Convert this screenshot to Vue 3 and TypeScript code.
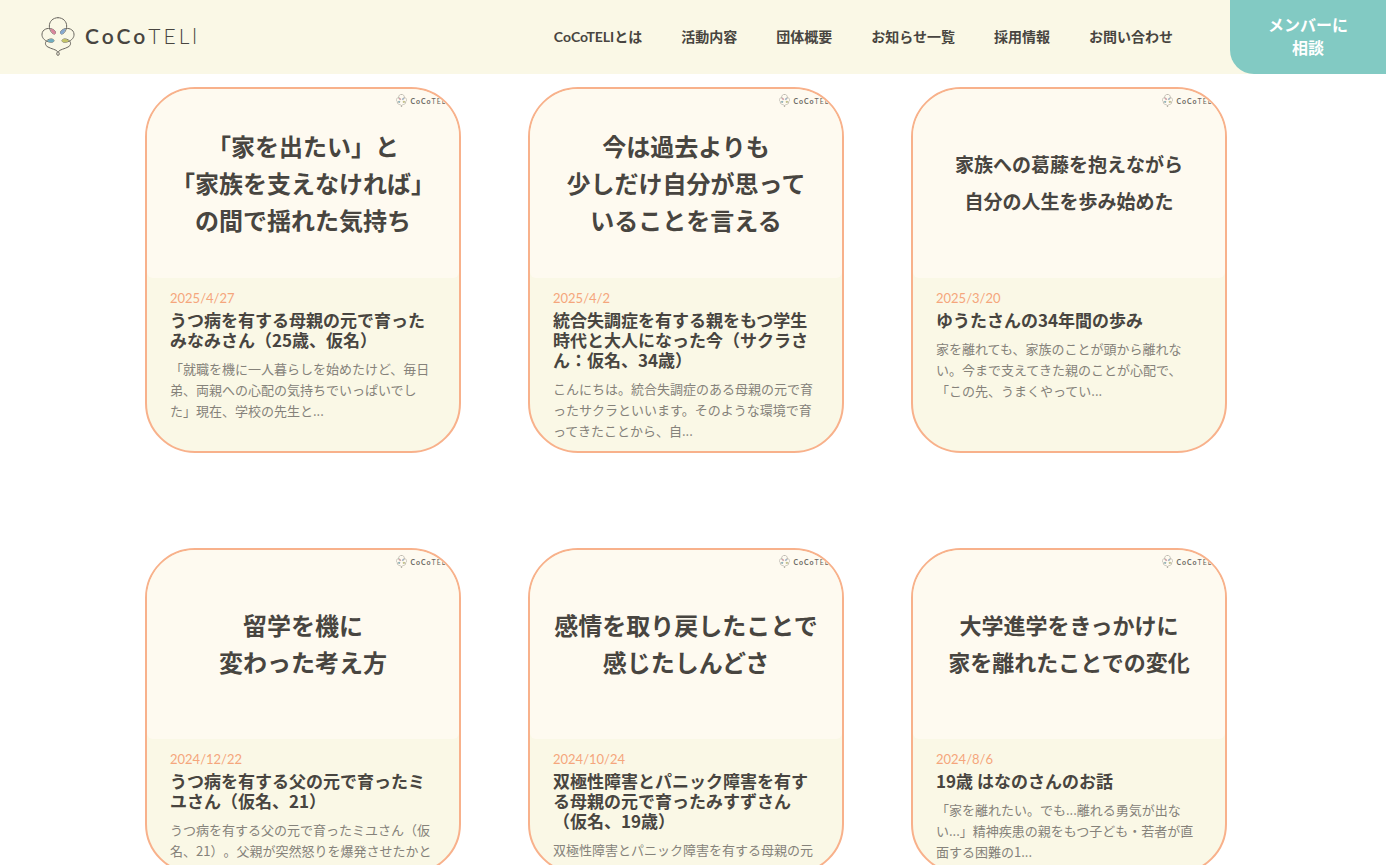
<script setup lang="ts">
import { defineComponent, h } from 'vue'

interface Story {
  caption: string[]
  size: 'large' | 'medium' | 'small'
  date: string
  title: string
  excerpt: string
}

const half =
  'M50 2C34 2 24 14 24 27C24 39 32 52 40 51C46 48 41 39 32 36C19 31 3 37 2 51C1 62 9 70 20 74C29 77 38 76 38 71C37 65 27 64 19 69C9 75 11 86 20 90C30 96 44 97 49 104C44 110 46 115 50 115'

const BrandMark = defineComponent({
  setup: () => () =>
    h('svg', { viewBox: '0 0 100 117', fill: 'none', 'aria-hidden': 'true' }, [
      h('g', { stroke: '#6a6760', 'stroke-width': 3, 'stroke-linecap': 'round' }, [
        h('path', { d: half }),
        h('path', { d: half, transform: 'matrix(-1 0 0 1 100 0)' }),
      ]),
      h('path', { d: 'M27 35C36 35 45 43 43 50C37 55 29 46 27 35Z', fill: '#d9869d' }),
      h('path', { d: 'M73 35C64 35 55 43 57 50C63 55 71 46 73 35Z', fill: '#86a9d0' }),
      h('path', { d: 'M17 72C25 64 37 64 38 71C37 77 25 77 17 72Z', fill: '#6fadc0' }),
      h('path', { d: 'M83 72C75 64 63 64 62 71C63 77 75 77 83 72Z', fill: '#c5c568' }),
    ]),
})

const links: string[] = ['CoCoTELIとは', '活動内容', '団体概要', 'お知らせ一覧', '採用情報', 'お問い合わせ']

const stories: Story[] = [
  {
    caption: ['「家を出たい」と', '「家族を支えなければ」', 'の間で揺れた気持ち'],
    size: 'large',
    date: '2025/4/27',
    title: 'うつ病を有する母親の元で育ったみなみさん（25歳、仮名）',
    excerpt: '「就職を機に一人暮らしを始めたけど、毎日弟、両親への心配の気持ちでいっぱいでした」現在、学校の先生と...',
  },
  {
    caption: ['今は過去よりも', '少しだけ自分が思って', 'いることを言える'],
    size: 'large',
    date: '2025/4/2',
    title: '統合失調症を有する親をもつ学生時代と大人になった今（サクラさん：仮名、34歳）',
    excerpt: 'こんにちは。統合失調症のある母親の元で育ったサクラといいます。そのような環境で育ってきたことから、自...',
  },
  {
    caption: ['家族への葛藤を抱えながら', '自分の人生を歩み始めた'],
    size: 'small',
    date: '2025/3/20',
    title: 'ゆうたさんの34年間の歩み',
    excerpt: '家を離れても、家族のことが頭から離れない。今まで支えてきた親のことが心配で、「この先、うまくやってい...',
  },
  {
    caption: ['留学を機に', '変わった考え方'],
    size: 'large',
    date: '2024/12/22',
    title: 'うつ病を有する父の元で育ったミユさん（仮名、21）',
    excerpt: 'うつ病を有する父の元で育ったミユさん（仮名、21）。父親が突然怒りを爆発させたかと',
  },
  {
    caption: ['感情を取り戻したことで', '感じたしんどさ'],
    size: 'large',
    date: '2024/10/24',
    title: '双極性障害とパニック障害を有する母親の元で育ったみすずさん（仮名、19歳）',
    excerpt: '双極性障害とパニック障害を有する母親の元',
  },
  {
    caption: ['大学進学をきっかけに', '家を離れたことでの変化'],
    size: 'medium',
    date: '2024/8/6',
    title: '19歳 はなのさんのお話',
    excerpt: '「家を離れたい。でも...離れる勇気が出ない...」精神疾患の親をもつ子ども・若者が直面する困難の1...',
  },
]
</script>

<template>
  <div class="page">
    <header class="header">
      <a class="logo" href="#">
        <BrandMark class="logo-mark" />
        <span class="logo-text"><b>CoCo</b>TELl</span>
      </a>
      <nav class="nav">
        <a v-for="link in links" :key="link" href="#">{{ link }}</a>
      </nav>
      <a class="consult" href="#">メンバーに<br />相談</a>
    </header>
    <main class="main">
      <div class="grid">
        <a v-for="story in stories" :key="story.date" class="card" href="#">
          <div class="cover">
            <div class="stamp">
              <BrandMark class="stamp-mark" />
              <span class="stamp-text"><b>CoCo</b>TELl</span>
            </div>
            <p class="caption" :class="story.size">
              <span v-for="line in story.caption" :key="line">{{ line }}</span>
            </p>
          </div>
          <div class="body">
            <time class="date">{{ story.date }}</time>
            <h2 class="title">{{ story.title }}</h2>
            <p class="excerpt">{{ story.excerpt }}</p>
          </div>
        </a>
      </div>
    </main>
  </div>
</template>

<style>
body {
  background: #fff;
}
</style>

<style scoped>
.page {
  height: 100vh;
  overflow: hidden auto;
  scrollbar-width: none;
  font-family: 'Noto Sans CJK JP', sans-serif;
  color: #484540;
  text-spacing-trim: space-all;
}
a {
  color: inherit;
  text-decoration: none;
}
.header {
  position: fixed;
  inset: 0 0 auto;
  z-index: 2;
  display: flex;
  align-items: center;
  height: 74px;
  background: #faf8e6;
}
.logo {
  display: flex;
  align-items: center;
  gap: 10px;
  padding: 0 0 2px 41px;
}
.logo-mark {
  width: 34px;
  height: 39px;
}
.logo-text {
  font: 300 21px/24px Lato, sans-serif;
  letter-spacing: 3px;
}
.logo-text b {
  font-weight: 600;
}
.nav {
  display: flex;
  gap: 39px;
  margin-left: auto;
  padding-right: 57px;
  font: 700 14px/20px Lato, 'Noto Sans CJK JP', sans-serif;
  white-space: nowrap;
}
.consult {
  box-sizing: border-box;
  display: flex;
  flex: none;
  align-items: center;
  justify-content: center;
  width: 156px;
  height: 74px;
  padding-bottom: 2px;
  border-bottom-left-radius: 24px;
  background: #82cac3;
  color: #fff;
  font-size: 16px;
  line-height: 23px;
  font-weight: 700;
  text-align: center;
}
.main {
  padding: 87px 14px 60px 0;
}
.grid {
  display: grid;
  grid-template-columns: repeat(3, 1fr);
  gap: 95px 67px;
  max-width: 1082px;
  margin: 0 auto;
}
.card {
  overflow: hidden;
  border: 2px solid #f8b18b;
  border-radius: 50px;
  background: #faf8e6;
}
.cover {
  box-sizing: border-box;
  position: relative;
  display: flex;
  align-items: center;
  justify-content: center;
  height: 189px;
  padding-bottom: 3px;
  border-radius: 0 0 6px 6px;
  background: #fefaf0;
}
.stamp {
  position: absolute;
  top: 5px;
  right: 10px;
  display: flex;
  align-items: center;
  gap: 3px;
  color: #6a6760;
}
.stamp-mark {
  width: 11px;
  height: 13px;
}
.stamp-text {
  font: 400 7px/12px Lato, sans-serif;
  letter-spacing: 1px;
}
.caption {
  margin: 0;
  font-weight: 700;
  line-height: 37px;
  text-align: center;
  white-space: nowrap;
}
.caption span {
  display: block;
}
.large {
  font-size: 24px;
}
.medium {
  font-size: 22px;
}
.small {
  font-size: 19px;
}
.body {
  padding: 11px 23px 10px;
}
.date {
  display: block;
  font: 400 13px/18px Lato, sans-serif;
  color: #f5a67c;
}
.title {
  margin: 3px 0 8px;
  font-size: 17px;
  line-height: 20px;
  font-weight: 700;
}
.excerpt {
  margin: 0;
  font-size: 13px;
  line-height: 21px;
  color: #85827a;
}
</style>
